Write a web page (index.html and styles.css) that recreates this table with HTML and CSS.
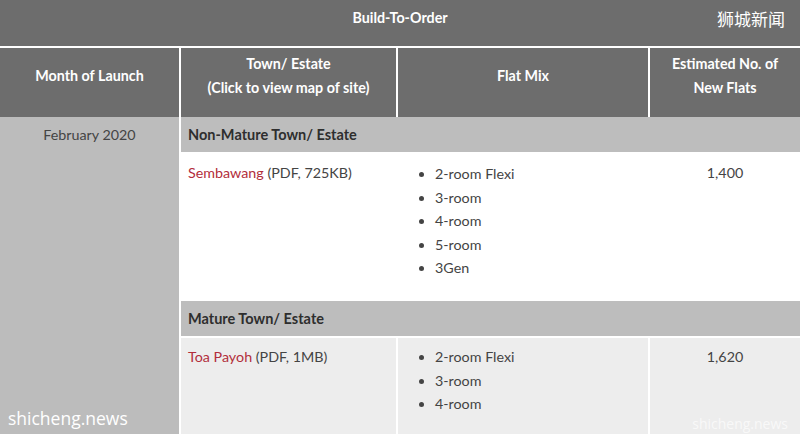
FILE: index.html
```html
<!DOCTYPE html>
<html lang="en">
<head>
<meta charset="utf-8">
<title>Build-To-Order</title>
<link rel="stylesheet" href="styles.css">
</head>
<body>
<div class="page">
  <table class="bto">
    <colgroup>
      <col class="c1"><col class="c2"><col class="c3"><col class="c4">
    </colgroup>
    <thead>
      <tr class="title-row">
        <th colspan="4">Build-To-Order</th>
      </tr>
      <tr class="head-row">
        <th>Month of Launch</th>
        <th>Town/ Estate<br>(Click to view map of site)</th>
        <th>Flat Mix</th>
        <th class="last">Estimated No. of<br>New Flats</th>
      </tr>
    </thead>
    <tbody>
      <tr class="sub-row">
        <td class="month" rowspan="4">February 2020</td>
        <td class="sub last" colspan="3">Non-Mature Town/ Estate</td>
      </tr>
      <tr class="data-row white">
        <td><a class="link" href="#">Sembawang</a> (PDF, 725KB)</td>
        <td>
          <ul class="mix">
            <li>2-room Flexi</li>
            <li>3-room</li>
            <li>4-room</li>
            <li>5-room</li>
            <li>3Gen</li>
          </ul>
        </td>
        <td class="num last">1,400</td>
      </tr>
      <tr class="sub-row">
        <td class="sub last" colspan="3">Mature Town/ Estate</td>
      </tr>
      <tr class="data-row light">
        <td><a class="link" href="#">Toa Payoh</a> (PDF, 1MB)</td>
        <td>
          <ul class="mix">
            <li>2-room Flexi</li>
            <li>3-room</li>
            <li>4-room</li>
          </ul>
        </td>
        <td class="num last">1,620</td>
      </tr>
    </tbody>
  </table>
  <div class="wm wm-cn">狮城新闻</div>
  <div class="wm wm-left">shicheng.news</div>
  <div class="wm wm-right">shicheng.news</div>
</div>
</body>
</html>
```
FILE: styles.css
```css
* { box-sizing: border-box; }
html, body { margin: 0; padding: 0; }
body {
  background: #bcbcbc;
  font-family: Lato, "Noto Sans", "Liberation Sans", sans-serif;
  overflow: hidden;
}
.page {
  position: relative;
  width: 800px;
  height: 436px;
  overflow: hidden;
}
.bto {
  width: 800px;
  table-layout: fixed;
  border-collapse: separate;
  border-spacing: 0;
}
.c1 { width: 181px; }
.c2 { width: 217px; }
.c3 { width: 252px; }
.c4 { width: 150px; }

.bto th, .bto td {
  border-right: 2px solid #fff;
  border-bottom: 2px solid #fff;
  padding: 0;
}
.bto .last { border-right: 0; }

.bto th {
  background: #6d6d6d;
  color: #fff;
  font-weight: 700;
  font-size: 14.3px;
  text-align: center;
}
.title-row th {
  height: 48px;
  vertical-align: top;
  padding-top: 8px;
  line-height: 19px;
  border-right: 0;
}
.head-row th {
  height: 69px;
  border-bottom: 0;
  line-height: 24px;
  padding: 4px 8px 17px;
  vertical-align: middle;
}

.bto td {
  color: #444;
  font-size: 14.3px;
  vertical-align: top;
}
.month {
  background: #bcbcbc;
  text-align: center;
  padding-top: 8px !important;
  line-height: 19px;
}
.sub {
  background: #bdbdbd;
  color: #2e2e2e !important;
  font-weight: 700;
  font-size: 14.5px !important;
  padding: 8px 7px !important;
  line-height: 19px;
  height: 36px;
}
.data-row td {
  padding: 7px 7px 0 !important;
  line-height: 23.5px;
}
.white td { background: #fff; height: 147px; }
.light td { background: #ededed; height: 98px; }
.white td:first-child, .white .mix { padding-top: 1px; }
.num { text-align: center; }
.link { color: #b22d3b; text-decoration: none; }
.mix {
  margin: 0;
  padding-left: 30px;
}

.wm {
  position: absolute;
  color: #fff;
  pointer-events: none;
}
.wm-cn {
  top: 7px;
  right: 15px;
  font-family: "Noto Sans CJK SC", sans-serif;
  font-size: 17px;
  line-height: 24px;
}
.wm-left {
  left: 8px;
  top: 405px;
  font-family: "Open Sans", sans-serif;
  font-size: 17.5px;
  line-height: 26px;
}
.wm-right {
  right: 12px;
  top: 414px;
  font-family: "Open Sans", sans-serif;
  font-size: 14px;
  line-height: 20px;
  color: rgba(255,255,255,0.65);
}
```
